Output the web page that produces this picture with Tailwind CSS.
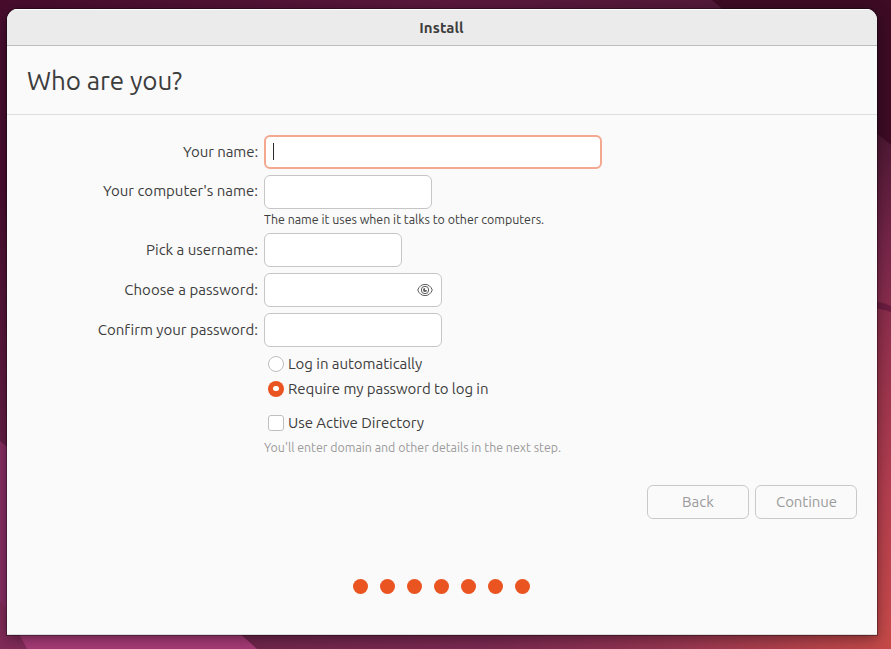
<!DOCTYPE html>
<html lang="en">
<head>
<meta charset="utf-8">
<title>Install</title>
<script src="https://cdn.jsdelivr.net/npm/@tailwindcss/browser@4"></script>
</head>
<body class="relative h-[649px] w-[891px] overflow-hidden bg-[#4a1230] font-[Ubuntu,'Noto_Sans',sans-serif] text-[15px] text-[#3d3d3d]">
<svg class="absolute inset-0 h-full w-full" viewBox="0 0 891 649" aria-hidden="true">
  <defs>
    <linearGradient id="left" x1="0" y1="0" x2="0" y2="1"><stop offset="0" stop-color="#470e2e"/><stop offset=".3" stop-color="#4a0e30"/><stop offset=".68" stop-color="#641e45"/><stop offset="1" stop-color="#6f2449"/></linearGradient>
    <linearGradient id="top" x1="0" y1="0" x2="1" y2="0"><stop offset="0" stop-color="#470c2c"/><stop offset=".5" stop-color="#5a183d"/><stop offset="1" stop-color="#501a38"/></linearGradient>
    <linearGradient id="right" x1="0" y1="0" x2="0" y2="1"><stop offset="0" stop-color="#4b1732"/><stop offset=".22" stop-color="#752549"/><stop offset=".4" stop-color="#92304d"/><stop offset=".7" stop-color="#b33e4f"/><stop offset="1" stop-color="#c74a49"/></linearGradient>
    <linearGradient id="bottom" x1="0" y1="0" x2="1" y2="0"><stop offset="0" stop-color="#6f254c"/><stop offset=".4" stop-color="#7b2950"/><stop offset=".65" stop-color="#943451"/><stop offset="1" stop-color="#c44947"/></linearGradient>
  </defs>
  <rect width="891" height="649" fill="url(#left)"/>
  <rect width="891" height="20" fill="url(#top)"/>
  <path d="M712 0H891V145L870 128V20H735z" fill="#3d0b24"/>
  <path d="M870 128L891 145V649H870z" fill="url(#right)"/>
  <path d="M870 302Q880 301 891 306V312Q880 308 870 308z" fill="#6b1d40"/>
  <path d="M0 441L12 451V620L0 602z" fill="#872d62"/>
  <path d="M0 602L14 620L27 649H0z" fill="#802b58"/>
  <path d="M240 630H891V649H257z" fill="url(#bottom)"/>
  <path d="M17 630H236L257 649H27z" fill="#a63a76"/>
</svg>
<main class="relative mt-[9px] ml-[7px] flex h-[626px] w-[870px] flex-col overflow-hidden rounded-t-[11px] border-b border-[#dcdcdc] bg-[#fafafa] shadow-[0_0_0_1px_rgba(0,0,0,0.3),0_3px_14px_rgba(0,0,0,0.42)]">
  <header class="flex h-[37px] shrink-0 items-center justify-center border-t border-b border-t-white border-b-[#bdbdbd] bg-[#ebebeb] pt-px pr-px font-bold">
    <span class="tracking-[0.1px]">Install</span>
  </header>
  <div class="flex h-[69px] shrink-0 items-center border-b border-[#dedede] pt-0.5 pl-5">
    <h1 class="text-[26px] leading-8 tracking-[-0.08px]">Who are you?</h1>
  </div>
  <form class="flex flex-col pt-5">
    <div class="grid grid-cols-[251px_1fr] gap-x-1.5 leading-[34px]">
      <label class="h-10 text-right tracking-[-0.08px]">Your name:</label>
      <div class="flex h-[34px] w-[338px] items-center rounded-md border-2 border-[#f4a88f] bg-white pl-[7px]"><span class="mb-0.5 h-[17px] w-px bg-[#2a2a2a]"></span></div>
      <label class="text-right leading-8">Your computer's name:</label>
      <div class="h-[34px] w-[168px] rounded-md border border-[#c6c6c6] bg-white"></div>
      <p class="col-start-2 h-6 text-[12.4px] leading-[21px]">The name it uses when it talks to other computers.</p>
      <label class="h-10 text-right">Pick a username:</label>
      <div class="h-[34px] w-[138px] rounded-md border border-[#c6c6c6] bg-white"></div>
      <label class="h-10 text-right tracking-[0.06px]">Choose a password:</label>
      <div class="flex h-[34px] w-[178px] items-center justify-end rounded-md border border-[#c6c6c6] bg-white pr-2">
        <svg class="size-4" viewBox="0 0 16 16" fill="none" stroke="#5c5c5c"><path d="M.7 8C2.2 4.2 4.8 2.4 8 2.4S13.800 4.200 15.300 8C13.800 11.800 11.200 13.600 8 13.600S2.200 11.800.7 8z"/><circle cx="8" cy="8" r="3.700"/><circle cx="8" cy="8" r="2" fill="#5c5c5c" stroke="none"/><path d="M8 8V6H10V8z" fill="#fff" stroke="none"/></svg>
      </div>
      <label class="text-right [font-variant-ligatures:none]">Confirm your password:</label>
      <div class="h-[34px] w-[178px] rounded-md border border-[#c6c6c6] bg-white"></div>
    </div>
    <div class="ml-[261px] mt-1 flex flex-col leading-[25px]">
      <label class="flex items-center gap-1"><span class="size-4 rounded-full border border-[#bfbfbf] bg-white"></span><span class="tracking-[-0.04px]">Log in automatically</span></label>
      <label class="flex items-center gap-1"><span class="flex size-4 items-center justify-center rounded-full bg-[#e95420]"><span class="size-[5.4px] rounded-full bg-white"></span></span><span class="tracking-[-0.07px]">Require my password to log in</span></label>
      <label class="mt-[9px] flex items-center gap-1"><span class="size-4 rounded-[3px] border border-[#bfbfbf] bg-white"></span><span class="tracking-[-0.04px]">Use Active Directory</span></label>
    </div>
    <p class="ml-[257px] text-[12.4px] leading-[25px] tracking-[-0.01px] text-[#9a9a9a]">You'll enter domain and other details in the next step.</p>
    <div class="mt-[25px] mr-5 flex justify-end gap-1.5 text-[#9a9a9a]">
      <button type="button" class="h-[34px] w-[102px] rounded-md border border-[#c9c9c9]">Back</button>
      <button type="button" class="h-[34px] w-[102px] rounded-md border border-[#c9c9c9] pl-px tracking-[-0.08px]">Continue</button>
    </div>
  </form>
  <div class="mt-[60px] flex justify-center gap-3 pr-[2px]">
    <span class="size-[15px] rounded-full bg-[#e95420]"></span><span class="size-[15px] rounded-full bg-[#e95420]"></span><span class="size-[15px] rounded-full bg-[#e95420]"></span><span class="size-[15px] rounded-full bg-[#e95420]"></span><span class="size-[15px] rounded-full bg-[#e95420]"></span><span class="size-[15px] rounded-full bg-[#e95420]"></span><span class="size-[15px] rounded-full bg-[#e95420]"></span>
  </div>
</main>
</body>
</html>
